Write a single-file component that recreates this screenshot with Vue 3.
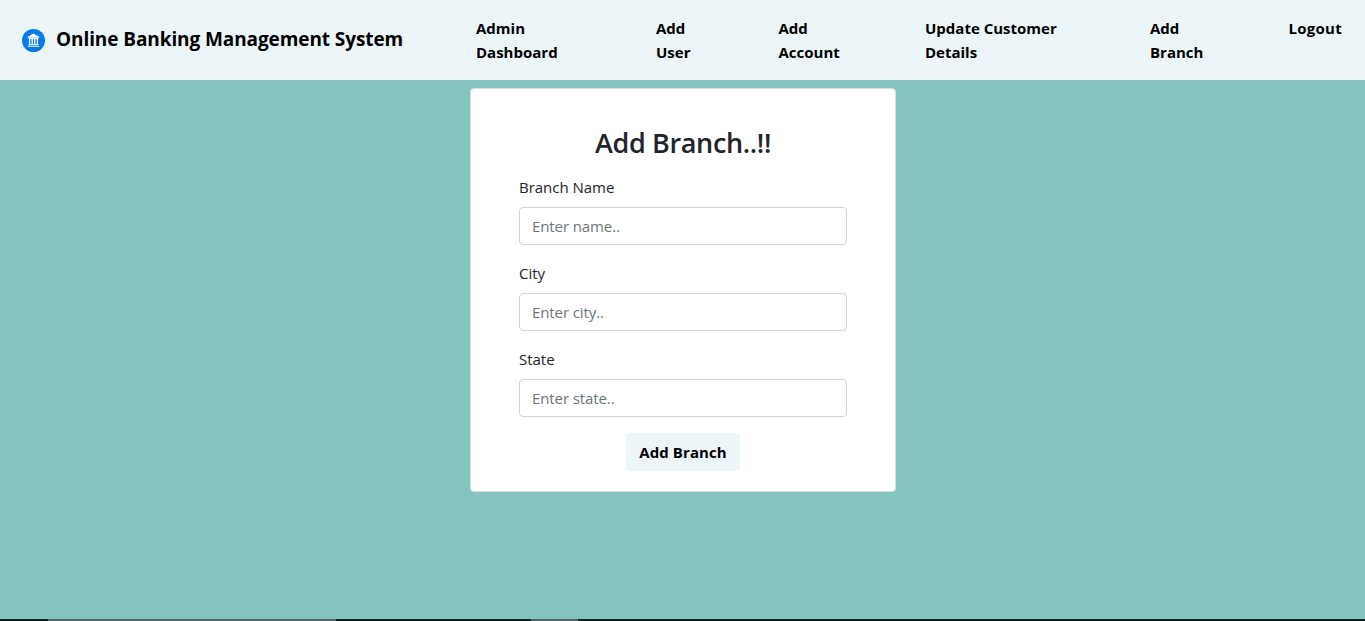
<script setup>
const links = ['Admin Dashboard', 'Add User', 'Add Account', 'Update Customer Details', 'Add Branch', 'Logout']
const fields = [
  { id: 'name', label: 'Branch Name', hint: 'Enter name..' },
  { id: 'city', label: 'City', hint: 'Enter city..' },
  { id: 'state', label: 'State', hint: 'Enter state..' },
]
</script>

<template>
  <div class="page">
    <header class="bar">
      <div class="brand">
        <svg class="logo" viewBox="0 0 24 24">
          <circle cx="12" cy="12" r="12" fill="#087be9" />
          <path d="M12 4.8 18 8v1H6V8z" fill="#fff" />
          <path d="M7 10h10M6.7 16.3h10.6M6 18h12" stroke="#fff" stroke-width="1" />
          <path d="M8 10v6M10.7 10v6M13.3 10v6M16 10v6" stroke="#fff" stroke-width="1.3" />
        </svg>
        <span class="title">Online Banking Management System</span>
      </div>
      <nav class="nav">
        <a v-for="(l, i) in links" :key="l" :class="'link l' + i"><span>{{ l }}</span></a>
      </nav>
    </header>
    <main class="main">
      <form class="card" @submit.prevent>
        <h3 class="heading"><span>Add Branch..!!</span></h3>
        <div v-for="f in fields" :key="f.id" class="group">
          <label :for="f.id"><span>{{ f.label }}</span></label>
          <input :id="f.id" type="text" :placeholder="f.hint" />
        </div>
        <button class="btn" type="submit"><span>Add Branch</span></button>
      </form>
    </main>
    <footer class="edge"><i class="seg wide"></i><i class="seg small"></i></footer>
  </div>
</template>

<style>
body { margin: 0; overflow: hidden; }
</style>

<style scoped>
* { box-sizing: border-box; }
.page { height: 621px; display: flex; flex-direction: column; background: #84c4be; font: 16px/24px "Segoe UI", "Open Sans", "Noto Sans", sans-serif; color: #212529; }
.bar { height: 80px; display: flex; background: #ecf6f9; color: #000; font-weight: 700; }
.brand { width: 476px; padding-left: 22px; display: flex; align-items: center; gap: 11px; }
.logo { width: 23px; height: 23px; flex: none; }
.title { font-size: 19px; line-height: 30px; letter-spacing: -0.09px; white-space: nowrap; position: relative; top: -1px; }
.nav { display: grid; grid-template-columns: 180px 122.5px 146.5px 225px 138.5px 76px; padding-top: 16px; }
.link { font-size: 15px; letter-spacing: 0; }
.l0 { width: 90px; }
.l1 { width: 50px; }
.l2 { width: 72px; }
.l3 { width: 150px; }
.l4 { width: 62px; }
.l5 { letter-spacing: 0.25px; }
.main { flex: 1; padding-top: 8px; display: flex; justify-content: center; align-items: flex-start; }
.card { width: 426px; height: 404px; margin-left: 1px; padding: 37px 48px 0; border: 1px solid #d3dfdd; border-radius: 4px; background: #fff; }
.heading { margin: 0 0 15px; text-align: center; font-size: 27px; line-height: 34px; font-weight: 600; letter-spacing: -0.35px; }
.group { margin-bottom: 16px; }
.group label { display: block; height: 24px; margin-bottom: 8px; font-size: 15px; letter-spacing: -0.02px; }
.group input { display: block; width: 100%; height: 38px; padding: 6px 12px; border: 1px solid #ced4da; border-radius: 4px; background: #fff; font-family: inherit; font-size: 15px; letter-spacing: -0.1px; color: #495057; }
.group input::placeholder { color: #6c757d; opacity: 1; }
.btn { display: block; width: 114px; height: 38px; margin: 0 auto; padding: 0; border: 0; border-radius: 4px; background: #ecf6f9; color: #000; font-family: inherit; font-size: 15px; font-weight: 700; letter-spacing: 0.08px; line-height: 24px; }
.edge { height: 2px; display: flex; background: #17221f; }
.seg { height: 2px; background: #4e635f; }
.wide { width: 288px; margin-left: 48px; }
.small { width: 47px; margin-left: 195px; }
</style>
